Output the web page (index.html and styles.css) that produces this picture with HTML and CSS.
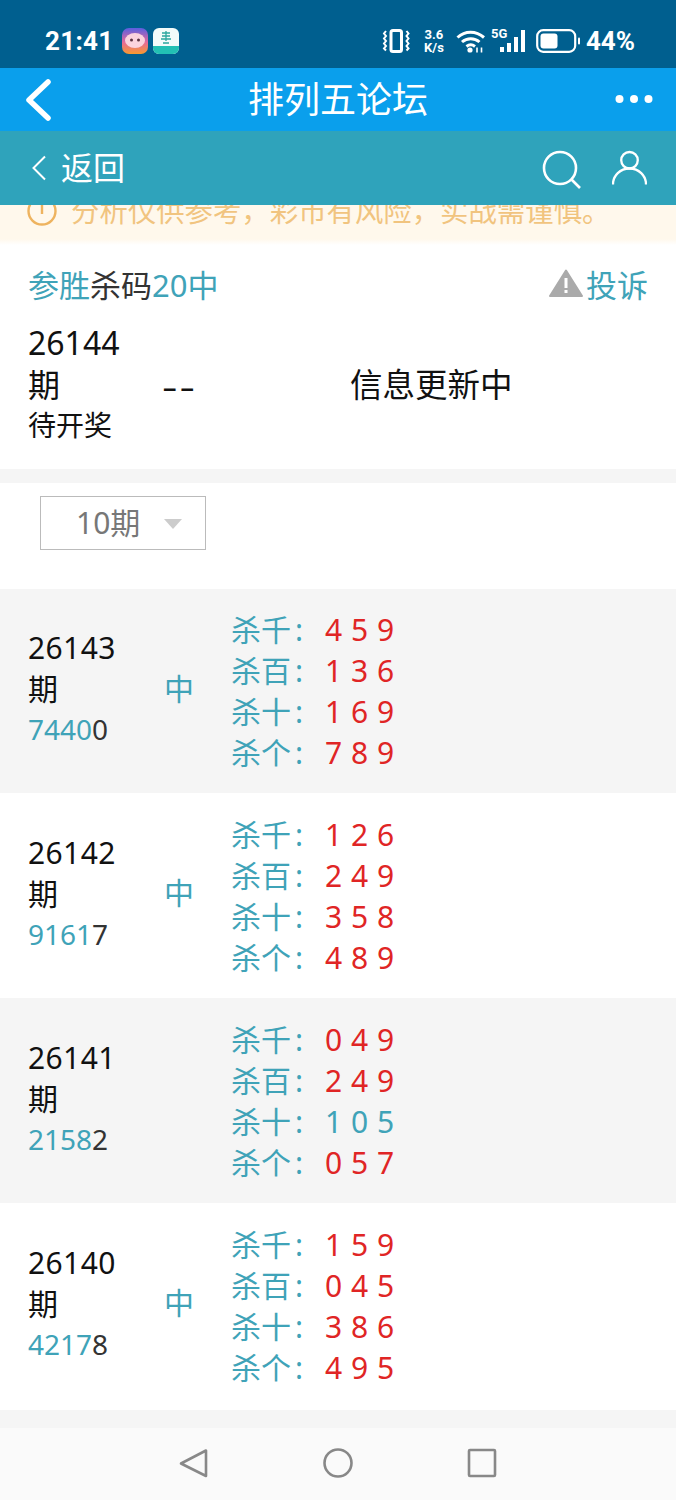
FILE: index.html
```html
<!DOCTYPE html>
<html lang="zh-CN">
<head>
<meta charset="utf-8">
<title>排列五论坛</title>
<link rel="stylesheet" href="styles.css">
</head>
<body>
<div class="page">
  <header class="status">
    <div class="status-left">
      <span class="clock">21:41</span>
      <svg class="app-icon" viewBox="0 0 26 26"><defs><linearGradient id="a" x1="0" y1="0" x2="0" y2="1"><stop offset="0" stop-color="#5a5fe0"/><stop offset=".55" stop-color="#e66a9a"/><stop offset="1" stop-color="#f79a2e"/></linearGradient></defs><rect width="26" height="26" rx="7" fill="url(#a)"/><ellipse cx="13" cy="12.5" rx="10" ry="7.5" fill="#fbd3de"/><circle cx="9.5" cy="12" r="1.5" fill="#5a3140"/><circle cx="16.5" cy="12" r="1.5" fill="#5a3140"/></svg>
      <svg class="app-icon" viewBox="0 0 26 26"><rect width="26" height="26" rx="6" fill="#f2fbfa"/><path d="M0 18h26v2a6 6 0 0 1-6 6H6a6 6 0 0 1-6-6z" fill="#22c0b4"/><path d="M9 5h8M9 8h8M8 11h10M13 3v10M10 15h6" stroke="#2aa79f" stroke-width="1.3" fill="none"/></svg>
    </div>
    <div class="status-right">
      <svg class="ic-vib" viewBox="0 0 28 24" fill="none" stroke="#fff"><rect x="9" y="1.500" width="10.500" height="21" rx="2" stroke-width="3"/><path d="M4 2l-2 2.500 2 2.500-2 2.500 2 2.500-2 2.500 2 2.500-2 2.500 2 2M24.500 2l2 2.500-2 2.500 2 2.500-2 2.500 2 2.500-2 2.500 2 2.500-2 2" stroke-width="2"/></svg>
      <span class="speed"><span>3.6</span><span>K/s</span></span>
      <svg class="ic-wifi" viewBox="0 0 30 24" fill="none" stroke="#fff" stroke-width="3"><path d="M1.500 8.500C9 1.500 20 1.500 28 8.500M6 13c5-4.500 12.500-4.500 17.500 0M10.500 17.500c2.500-2 6-2 8.500 0"/><circle cx="14" cy="21" r="2.600" fill="#fff" stroke="none"/><path d="M21 18.500v5M25.500 18.500v5" stroke-width="1.600"/></svg>
      <span class="signal"><span class="five-g">5G</span><svg viewBox="0 0 26 22" fill="#fff"><rect x="0" y="17" width="4" height="5"/><rect x="7" y="13" width="4" height="9"/><rect x="14" y="7" width="4" height="15"/><rect x="21" y="0" width="4" height="22"/></svg></span>
      <svg class="ic-batt" viewBox="0 0 44 24"><rect x="1.200" y="1.200" width="38" height="21.600" rx="6" fill="none" stroke="#fff" stroke-width="2.200"/><rect x="4.500" y="4.500" width="17" height="15" rx="3" fill="#fff"/><rect x="42" y="8.500" width="2" height="7" rx="1" fill="#fff"/></svg>
      <span class="pct">44%</span>
    </div>
  </header>

  <nav class="appbar">
    <svg class="ic-back" viewBox="0 0 30 42" fill="none" stroke="#fff" stroke-width="5.500" stroke-linecap="round" stroke-linejoin="round"><path d="M25 3L6 21l19 18"/></svg>
    <h1 class="appbar-title">排列五论坛</h1>
    <svg class="ic-more" viewBox="0 0 38 10" fill="#fff"><circle cx="4.500" cy="5" r="4"/><circle cx="19" cy="5" r="4"/><circle cx="33.500" cy="5" r="4"/></svg>
  </nav>

  <div class="subbar">
    <div class="sub-back">
      <svg class="ic-sub-back" viewBox="0 0 16 26" fill="none" stroke="#fff" stroke-width="2"><path d="M14 1.500L2.500 13 14 24.500"/></svg>
      <span>返回</span>
    </div>
    <div class="sub-actions">
      <svg class="ic-search" viewBox="0 0 40 40" fill="none" stroke="#fff" stroke-width="2.600"><circle cx="18" cy="18" r="16"/><path d="M29.500 29.500L38 38"/></svg>
      <svg class="ic-user" viewBox="0 0 36 36" fill="none" stroke="#fff" stroke-width="2.400"><circle cx="18" cy="10" r="8.500"/><path d="M1 35c0-9.500 7.500-16.500 17-16.500S35 25.500 35 35"/></svg>
    </div>
  </div>

  <div class="notice">
    <div class="notice-inner">
      <svg class="ic-info" viewBox="0 0 30 30" fill="none" stroke="#eeb35f" stroke-width="2.400"><circle cx="15" cy="15" r="13.500"/><path d="M15 8v10"/></svg>
      <span>分析仅供参考，彩市有风险，实战需谨慎。</span>
    </div>
  </div>

  <section class="card">
    <div class="card-title">
      <div class="title-text"><span class="teal">参胜</span>杀码<span class="teal">20中</span></div>
      <div class="complain">
        <svg class="ic-warn" viewBox="0 0 34 28"><path d="M17 1.500L33 27H1z" fill="#aaa" stroke="#aaa" stroke-linejoin="round" stroke-width="2"/><path d="M17 9v10M17 21v3" stroke="#fff" stroke-width="3"/></svg>
        <span class="teal">投诉</span>
      </div>
    </div>
    <div class="card-body">
      <div class="issue-big">26144期<div class="pending">待开奖</div></div>
      <div class="dash">--</div>
      <div class="updating">信息更新中</div>
    </div>
  </section>

  <section class="filter">
    <div class="select"><span>10期</span><i class="caret"></i></div>
  </section>

  <section class="row gray first">
    <div class="issue">26143期<div class="code"><span class="teal">7440</span>0</div></div>
    <div class="hit teal">中</div>
    <ul class="kills">
      <li>杀千<span class="colon">:</span><b class="red">4 5 9</b></li>
      <li>杀百<span class="colon">:</span><b class="red">1 3 6</b></li>
      <li>杀十<span class="colon">:</span><b class="red">1 6 9</b></li>
      <li>杀个<span class="colon">:</span><b class="red">7 8 9</b></li>
    </ul>
  </section>
  <section class="row">
    <div class="issue">26142期<div class="code"><span class="teal">9161</span>7</div></div>
    <div class="hit teal">中</div>
    <ul class="kills">
      <li>杀千<span class="colon">:</span><b class="red">1 2 6</b></li>
      <li>杀百<span class="colon">:</span><b class="red">2 4 9</b></li>
      <li>杀十<span class="colon">:</span><b class="red">3 5 8</b></li>
      <li>杀个<span class="colon">:</span><b class="red">4 8 9</b></li>
    </ul>
  </section>
  <section class="row gray">
    <div class="issue">26141期<div class="code"><span class="teal">2158</span>2</div></div>
    <div class="hit teal"></div>
    <ul class="kills">
      <li>杀千<span class="colon">:</span><b class="red">0 4 9</b></li>
      <li>杀百<span class="colon">:</span><b class="red">2 4 9</b></li>
      <li>杀十<span class="colon">:</span><b class="teal">1 0 5</b></li>
      <li>杀个<span class="colon">:</span><b class="red">0 5 7</b></li>
    </ul>
  </section>
  <section class="row last">
    <div class="issue">26140期<div class="code"><span class="teal">4217</span>8</div></div>
    <div class="hit teal">中</div>
    <ul class="kills">
      <li>杀千<span class="colon">:</span><b class="red">1 5 9</b></li>
      <li>杀百<span class="colon">:</span><b class="red">0 4 5</b></li>
      <li>杀十<span class="colon">:</span><b class="red">3 8 6</b></li>
      <li>杀个<span class="colon">:</span><b class="red">4 9 5</b></li>
    </ul>
  </section>

  <div class="spacer"></div>

  <footer class="navbar">
    <svg class="ic-nav" viewBox="0 0 30 30" fill="none" stroke="#888" stroke-width="2.600" stroke-linejoin="round"><path d="M27 2.500V28L2 15.500z"/></svg>
    <svg class="ic-nav" viewBox="0 0 30 30" fill="none" stroke="#888" stroke-width="2.600"><circle cx="15" cy="15" r="13.500"/></svg>
    <svg class="ic-nav" viewBox="0 0 30 30" fill="none" stroke="#888" stroke-width="2.600" stroke-linejoin="round"><rect x="2" y="2" width="26" height="26" rx="1"/></svg>
  </footer>
</div>
</body>
</html>
```

FILE: styles.css
```css
* { box-sizing: border-box; }
html, body { margin: 0; padding: 0; background: #fff; }
body { font-family: "Noto Sans", "Noto Sans CJK SC", sans-serif; color: #111; }
.page { width: 676px; height: 1500px; overflow: hidden; display: flex; flex-direction: column; background: #f5f5f5; }
.teal { color: #3fa3b8; }
.red { color: #e02525; }

.status { height: 68px; flex: none; background: #005f8f; color: #fff; display: flex; justify-content: space-between; align-items: center; padding: 14px 41px 0 45px; }
.status-left { display: flex; align-items: center; gap: 5px; }
.clock { font: 700 26px/1 Roboto, sans-serif; margin-right: 3px; letter-spacing: .3px; }
.app-icon { width: 26px; height: 26px; display: block; }
.status-right { display: flex; align-items: center; }
.ic-vib { width: 28px; height: 24px; margin-right: 11px; }
.speed { display: flex; flex-direction: column; align-items: center; font: 700 13px/13px Roboto, sans-serif; width: 26px; margin-right: 9px; }
.ic-wifi { width: 30px; height: 24px; margin-right: 5px; }
.signal { position: relative; width: 35px; height: 24px; display: block; margin-right: 10px; }
.signal svg { position: absolute; left: 9px; top: 1px; width: 26px; height: 22px; }
.five-g { position: absolute; left: 0; top: -2px; font: 700 13px/14px Roboto, sans-serif; }
.ic-batt { width: 44px; height: 24px; margin-right: 6px; }
.pct { font: 700 26px/1 Roboto, sans-serif; }

.appbar { height: 63px; flex: none; background: #0a9fec; display: grid; grid-template-columns: 1fr auto 1fr; align-items: center; padding: 0 23px; color: #fff; }
.ic-back { width: 30px; height: 42px; }
.appbar-title { margin: 0; font-size: 36px; font-weight: 400; line-height: 1; }
.ic-more { width: 38px; height: 10px; margin-top: -2px; justify-self: end; }

.subbar { height: 74px; flex: none; background: #2fa3bb; color: #fff; display: flex; align-items: center; justify-content: space-between; padding: 0 29px 0 31px; }
.sub-back { display: flex; align-items: center; font-size: 32px; line-height: 1; gap: 14px; }
.ic-sub-back { width: 16px; height: 26px; }
.sub-actions { display: flex; align-items: center; gap: 30px; }
.ic-search { width: 40px; height: 40px; margin-top: 4px; }
.ic-user { width: 35px; height: 36px; }

.notice { height: 40px; flex: none; overflow: hidden; background: linear-gradient(#fff8ec 85%, #fff); }
.notice-inner { display: flex; align-items: center; gap: 14px; margin-top: -14px; padding-left: 27px; height: 40px; font-size: 28.400px; line-height: 1; color: #f1c47f; white-space: nowrap; }
.ic-info { width: 30px; height: 30px; flex: none; }

.card { height: 224px; flex: none; background: #fff; padding: 16px 28px 0; }
.card-title { display: flex; justify-content: space-between; align-items: center; height: 44px; font-size: 31px; color: #333; }
.complain { display: flex; align-items: center; gap: 3px; }
.ic-warn { width: 34px; height: 28px; }
.card-body { display: flex; align-items: center; margin-top: 17px; }
.issue-big { width: 134px; font-size: 32px; line-height: 42px; color: #111; padding-right: 30px; }
.pending { font-size: 28px; line-height: 38px; }
.dash { width: 188px; font-size: 48px; font-weight: 300; line-height: 42px; letter-spacing: 2px; margin-top: 4px; }
.updating { font-size: 32.500px; line-height: 42px; margin-top: 4px; }

.filter { height: 106px; flex: none; margin-top: 14px; background: #fff; padding: 13px 0 0 40px; }
.select { width: 166px; height: 54px; border: 1px solid #bbb; display: flex; align-items: center; padding-left: 35px; font-size: 30px; color: #777; }
.select span { margin-top: -4px; }
.caret { width: 0; height: 0; margin-left: 24px; margin-top: 2px; border-style: solid; border-width: 10px 9px 0; border-color: #ccc transparent transparent; }

.row { height: 205px; flex: none; background: #fff; display: flex; align-items: center; padding: 0 0 2px 28px; }
.row.gray { background: #f5f5f5; }
.row.first { height: 204px; }
.row.last { height: 207px; padding-bottom: 4px; }
.issue { width: 136px; font-size: 30px; line-height: 41px; letter-spacing: .4px; color: #111; padding: 0 40px 3px 0; }
.code { font-size: 28px; letter-spacing: 0; color: #333; }
.hit { width: 67px; font-size: 30px; line-height: 41px; padding-bottom: 4px; }
.kills { list-style: none; margin: 2px 0 0; padding: 0; font-size: 30px; line-height: 41px; color: #3fa3b8; }
.kills li { white-space: nowrap; }
.colon { margin-left: 4px; }
.kills b { font-weight: 400; margin-left: 22px; word-spacing: 1px; }

.spacer { height: 18px; flex: none; background: #f5f5f5; }
.navbar { flex: 1; background: #fafafa; display: flex; align-items: center; justify-content: center; gap: 114px; padding-bottom: 2px; }
.ic-nav { width: 30px; height: 30px; }
```
